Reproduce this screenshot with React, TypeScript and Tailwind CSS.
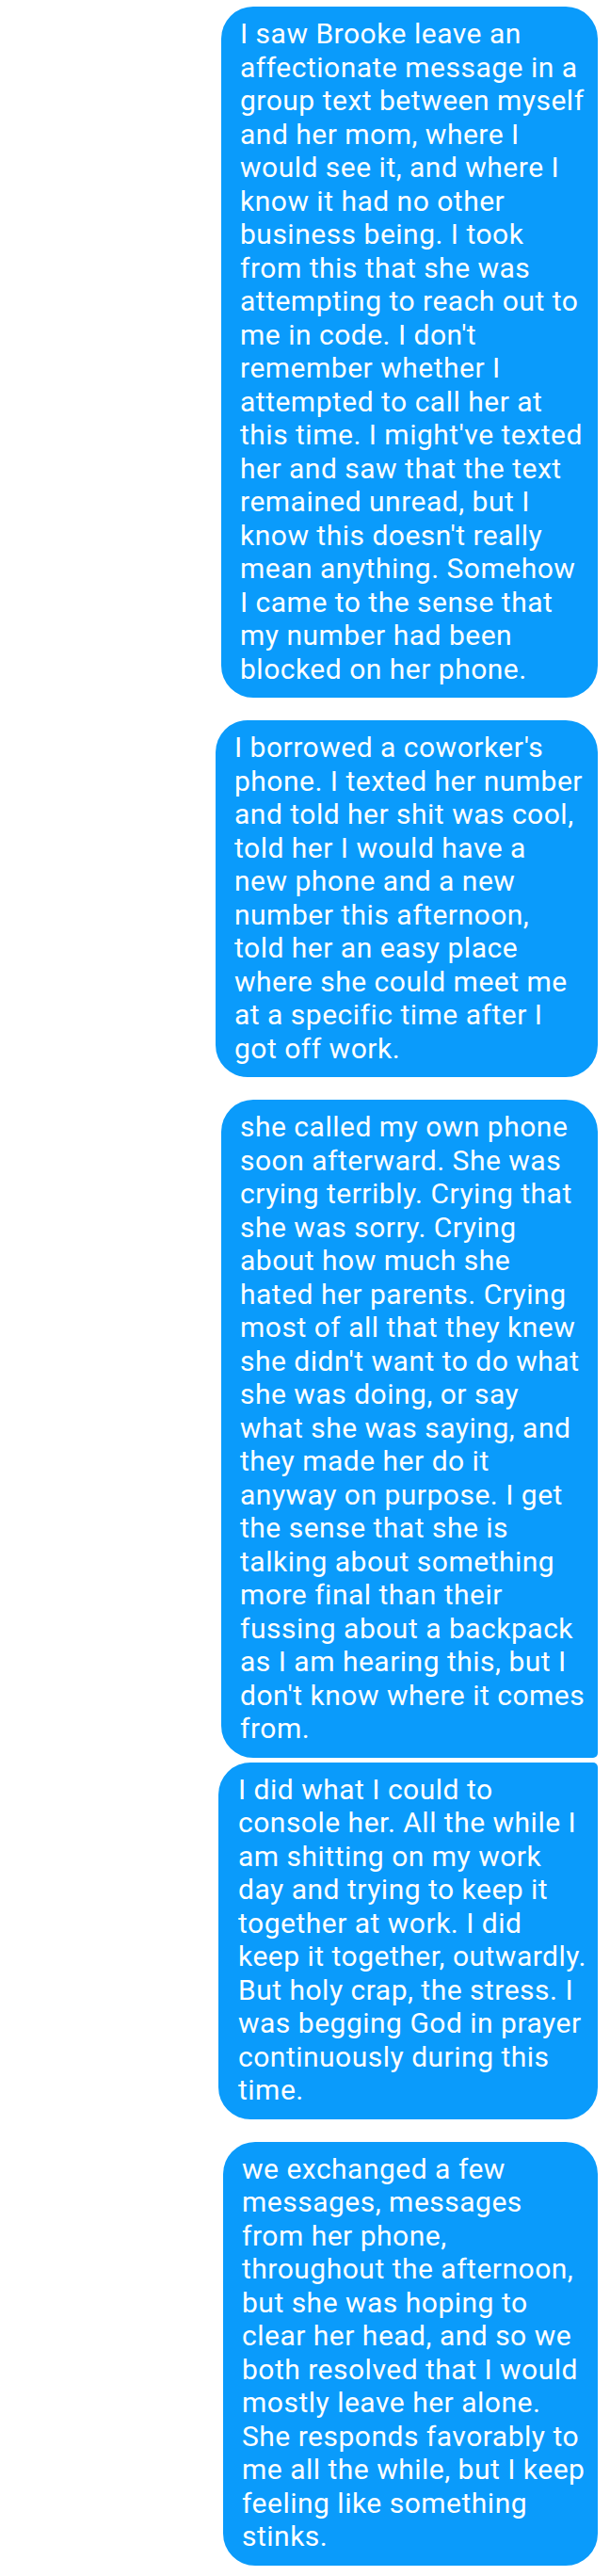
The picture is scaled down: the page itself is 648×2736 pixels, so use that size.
const messages = [
    {
        width: "w-[400px]",
        corners: "rounded-[34px]",
        gap: "mt-[7px]",
        pad: "pl-[20px]",
        lines: [
            "I saw Brooke leave an",
            "affectionate message in a",
            "group text between myself",
            "and her mom, where I",
            "would see it, and where I",
            "know it had no other",
            "business being. I took",
            "from this that she was",
            "attempting to reach out to",
            "me in code. I don't",
            "remember whether I",
            "attempted to call her at",
            "this time. I might've texted",
            "her and saw that the text",
            "remained unread, but I",
            "know this doesn't really",
            "mean anything. Somehow",
            "I came to the sense that",
            "my number had been",
            "blocked on her phone.",
        ],
    },
    {
        width: "w-[406px]",
        corners: "rounded-[34px]",
        gap: "mt-[24px]",
        pad: "pl-[20px]",
        lines: [
            "I borrowed a coworker's",
            "phone. I texted her number",
            "and told her shit was cool,",
            "told her I would have a",
            "new phone and a new",
            "number this afternoon,",
            "told her an easy place",
            "where she could meet me",
            "at a specific time after I",
            "got off work.",
        ],
    },
    {
        width: "w-[400px]",
        corners: "rounded-[34px] rounded-br-[5px]",
        gap: "mt-[24px]",
        pad: "pl-[20px]",
        lines: [
            "she called my own phone",
            "soon afterward. She was",
            "crying terribly. Crying that",
            "she was sorry. Crying",
            "about how much she",
            "hated her parents. Crying",
            "most of all that they knew",
            "she didn't want to do what",
            "she was doing, or say",
            "what she was saying, and",
            "they made her do it",
            "anyway on purpose. I get",
            "the sense that she is",
            "talking about something",
            "more final than their",
            "fussing about a backpack",
            "as I am hearing this, but I",
            "don't know where it comes",
            "from.",
        ],
    },
    {
        width: "w-[403px]",
        corners: "rounded-[34px] rounded-tr-[5px]",
        gap: "mt-[5px]",
        pad: "pl-[21px]",
        lines: [
            "I did what I could to",
            "console her. All the while I",
            "am shitting on my work",
            "day and trying to keep it",
            "together at work. I did",
            "keep it together, outwardly.",
            "But holy crap, the stress. I",
            "was begging God in prayer",
            "continuously during this",
            "time.",
        ],
    },
    {
        width: "w-[398px]",
        corners: "rounded-[34px]",
        gap: "mt-[24px]",
        pad: "pl-[20px]",
        lines: [
            "we exchanged a few",
            "messages, messages",
            "from her phone,",
            "throughout the afternoon,",
            "but she was hoping to",
            "clear her head, and so we",
            "both resolved that I would",
            "mostly leave her alone.",
            "She responds favorably to",
            "me all the while, but I keep",
            "feeling like something",
            "stinks.",
        ],
    },
];

export default function App() {
    return (
        <div className="w-[648px] h-[2736px] bg-white overflow-hidden font-['Roboto',sans-serif]">
            <div className="flex flex-col items-end pr-[13px]">
                {messages.map((msg, index) => (
                    <div
                        key={index}
                        className={`${msg.gap} ${msg.width} ${msg.corners} ${msg.pad} bg-[#0a9bfb] pt-[11px] pb-[13px] text-white text-[30px] leading-[35.5px] tracking-[0.5px]`}
                    >
                        {msg.lines.map((line, i) => (
                            <div key={i} className="whitespace-nowrap">
                                {line}
                            </div>
                        ))}
                    </div>
                ))}
            </div>
        </div>
    );
}
